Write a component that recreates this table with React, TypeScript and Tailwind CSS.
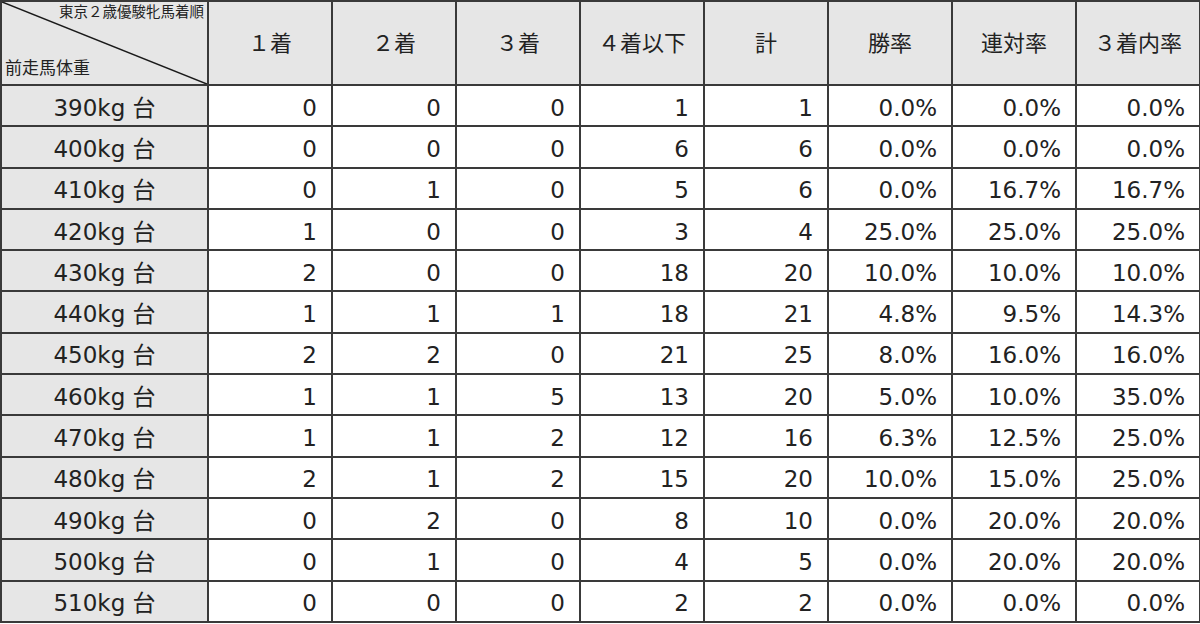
import React from "react";

const ROWS: [string, number, number, number, number, number, string, string, string][] = [
  ["390kg 台", 0, 0, 0, 1, 1, "0.0%", "0.0%", "0.0%"],
  ["400kg 台", 0, 0, 0, 6, 6, "0.0%", "0.0%", "0.0%"],
  ["410kg 台", 0, 1, 0, 5, 6, "0.0%", "16.7%", "16.7%"],
  ["420kg 台", 1, 0, 0, 3, 4, "25.0%", "25.0%", "25.0%"],
  ["430kg 台", 2, 0, 0, 18, 20, "10.0%", "10.0%", "10.0%"],
  ["440kg 台", 1, 1, 1, 18, 21, "4.8%", "9.5%", "14.3%"],
  ["450kg 台", 2, 2, 0, 21, 25, "8.0%", "16.0%", "16.0%"],
  ["460kg 台", 1, 1, 5, 13, 20, "5.0%", "10.0%", "35.0%"],
  ["470kg 台", 1, 1, 2, 12, 16, "6.3%", "12.5%", "25.0%"],
  ["480kg 台", 2, 1, 2, 15, 20, "10.0%", "15.0%", "25.0%"],
  ["490kg 台", 0, 2, 0, 8, 10, "0.0%", "20.0%", "20.0%"],
  ["500kg 台", 0, 1, 0, 4, 5, "0.0%", "20.0%", "20.0%"],
  ["510kg 台", 0, 0, 0, 2, 2, "0.0%", "0.0%", "0.0%"],
];

const HEADERS = ["１着", "２着", "３着", "４着以下", "計", "勝率", "連対率", "３着内率"];

const font = "font-['DejaVu_Sans','Noto_Sans_CJK_JP',sans-serif]";

export default function App() {
  return (
    <div className={`w-[1200px] h-[624px] bg-white text-[#222] ${font}`}>
      <table className="table-fixed border-collapse w-[1199px]">
        <colgroup>
          <col className="w-[207px]" />
          {HEADERS.map((h) => (
            <col key={h} className="w-[124px]" />
          ))}
        </colgroup>
        <thead>
          <tr className="h-[84px] bg-[#e6e6e6]">
            <th className="relative border-2 border-[#3a3a3a] p-0 font-normal">
              <svg className="absolute inset-0 w-full h-full" viewBox="0 0 207 84" preserveAspectRatio="none">
                <line x1="0" y1="0" x2="207" y2="84" stroke="#1a1a1a" strokeWidth="1.6" />
              </svg>
              <span className="absolute right-[3px] top-[3px] text-[14.5px] leading-none">東京２歳優駿牝馬着順</span>
              <span className="absolute left-[3px] bottom-[7px] text-[17px] leading-none">前走馬体重</span>
            </th>
            {HEADERS.map((h) => (
              <th key={h} className="border-2 border-[#3a3a3a] font-normal text-[22px] text-center">
                {h}
              </th>
            ))}
          </tr>
        </thead>
        <tbody>
          {ROWS.map((r) => (
            <tr key={r[0]} className="h-[41.3px]">
              <td className="border-2 border-[#3a3a3a] bg-[#e6e6e6] text-center text-[23px] leading-none pt-[5px]">
                {r[0]}
              </td>
              {r.slice(1).map((v, i) => (
                <td key={i} className="border-2 border-[#3a3a3a] text-right pr-[14px] text-[23px] leading-none pt-[5px]">
                  {v}
                </td>
              ))}
            </tr>
          ))}
        </tbody>
      </table>
    </div>
  );
}
